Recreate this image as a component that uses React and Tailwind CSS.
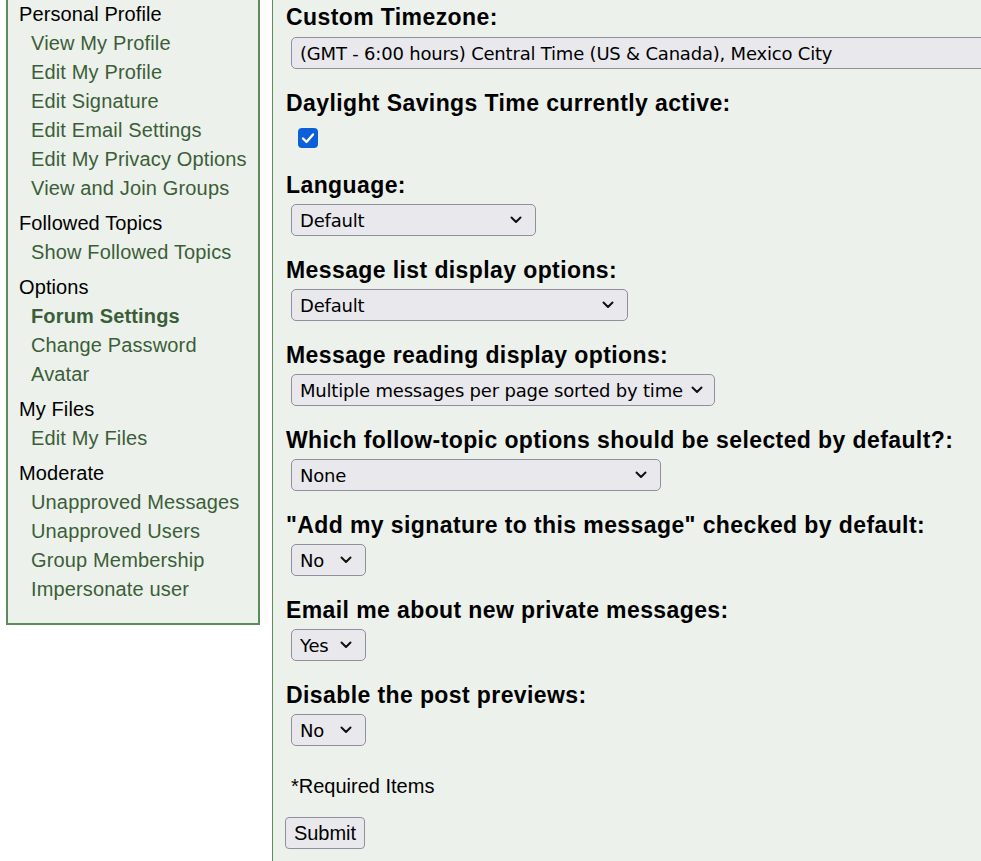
const sections = [
  {
    title: "Personal Profile",
    links: [
      "View My Profile",
      "Edit My Profile",
      "Edit Signature",
      "Edit Email Settings",
      "Edit My Privacy Options",
      "View and Join Groups",
    ],
  },
  { title: "Followed Topics", links: ["Show Followed Topics"] },
  {
    title: "Options",
    links: ["Forum Settings", "Change Password", "Avatar"],
    active: "Forum Settings",
  },
  { title: "My Files", links: ["Edit My Files"] },
  {
    title: "Moderate",
    links: [
      "Unapproved Messages",
      "Unapproved Users",
      "Group Membership",
      "Impersonate user",
    ],
  },
];

function Chevron() {
  return (
    <svg width="12" height="8" viewBox="0 0 12 8" fill="none" className="shrink-0">
      <path
        d="M1.5 1.5 L6 6 L10.5 1.5"
        stroke="#111"
        strokeWidth="2"
        strokeLinecap="round"
        strokeLinejoin="round"
      />
    </svg>
  );
}

function Select({ value, width }) {
  return (
    <div
      className={`mt-[7px] ml-[5px] flex h-[32px] items-center justify-between gap-[8px] rounded-[5px] border border-[#8f8f9d] bg-[#e9e9ed] pl-[8px] pr-[13px] text-[18px] tracking-[-0.2px] text-black font-['DejaVu_Sans',sans-serif] ${width}`}
    >
      <span className="whitespace-nowrap">{value}</span>
      <Chevron />
    </div>
  );
}

function Label({ children }) {
  return (
    <div className="text-[23px] font-bold leading-[24px] tracking-[0.4px] text-black">
      {children}
    </div>
  );
}

function Field({ label, children }) {
  return (
    <div className="mb-[22px]">
      <Label>{label}</Label>
      {children}
    </div>
  );
}

export default function App() {
  return (
    <div className="flex min-h-[861px] bg-white font-['Liberation_Sans',Arial,sans-serif]">
      <div className="ml-[6px] w-[254px] shrink-0 self-start">
        <div className="border-x-2 border-b-2 border-[#5f8a5c] bg-[#edf1ec] pb-[19px] pl-[11px]">
          {sections.map((s, i) => (
            <div key={s.title} className={i > 0 ? "mt-[6px]" : ""}>
              <div className="text-[20px] leading-[29px] tracking-[0.1px] text-black">
                {s.title}
              </div>
              {s.links.map((l) => (
                <div
                  key={l}
                  className={`pl-[12px] text-[20px] leading-[29px] tracking-[0.15px] text-[#3b5e38] ${
                    s.active === l ? "font-bold" : ""
                  }`}
                >
                  {l}
                </div>
              ))}
            </div>
          ))}
        </div>
      </div>

      <div className="ml-[12px] flex-1 overflow-hidden border-l border-[#5f8a5c] bg-[#edf1ec] pl-[13px] pt-[5px]">
        <Field label="Custom Timezone:">
          <div className="mt-[8px] ml-[5px] flex h-[32px] w-[720px] items-center rounded-l-[5px] border border-[#8f8f9d] bg-[#e9e9ed] pl-[8px] text-[18px] tracking-[-0.2px] font-['DejaVu_Sans',sans-serif]">
            <span className="whitespace-nowrap">
              (GMT - 6:00 hours) Central Time (US &amp; Canada), Mexico City
            </span>
          </div>
        </Field>

        <div className="mb-[25px]">
          <Label>Daylight Savings Time currently active:</Label>
          <div className="mt-[13px] ml-[12px] flex h-[20px] w-[20px] items-center justify-center rounded-[4px] bg-[#0b5fd8]">
            <svg width="14" height="12" viewBox="0 0 14 12" fill="none">
              <path
                d="M2 6.5 L5.5 10 L12 2.5"
                stroke="white"
                strokeWidth="2.4"
                strokeLinecap="round"
                strokeLinejoin="round"
              />
            </svg>
          </div>
        </div>

        <Field label="Language:">
          <Select value="Default" width="w-[245px]" />
        </Field>
        <Field label="Message list display options:">
          <Select value="Default" width="w-[337px]" />
        </Field>
        <Field label="Message reading display options:">
          <Select
            value="Multiple messages per page sorted by time"
            width="w-[424px]"
          />
        </Field>
        <Field label="Which follow-topic options should be selected by default?:">
          <Select value="None" width="w-[370px]" />
        </Field>
        <Field label={'"Add my signature to this message" checked by default:'}>
          <Select value="No" width="w-[75px]" />
        </Field>
        <Field label="Email me about new private messages:">
          <Select value="Yes" width="w-[75px]" />
        </Field>
        <Field label="Disable the post previews:">
          <Select value="No" width="w-[75px]" />
        </Field>

        <div className="mt-[28px] ml-[5px] text-[20px] leading-[24px] text-black">
          *Required Items
        </div>
        <button className="mt-[19px] mb-[12px] -ml-[1px] h-[32px] w-[80px] rounded-[4px] border border-[#8f8f9d] bg-[#e9e9ed] text-[20px] text-black">
          Submit
        </button>
      </div>
    </div>
  );
}
